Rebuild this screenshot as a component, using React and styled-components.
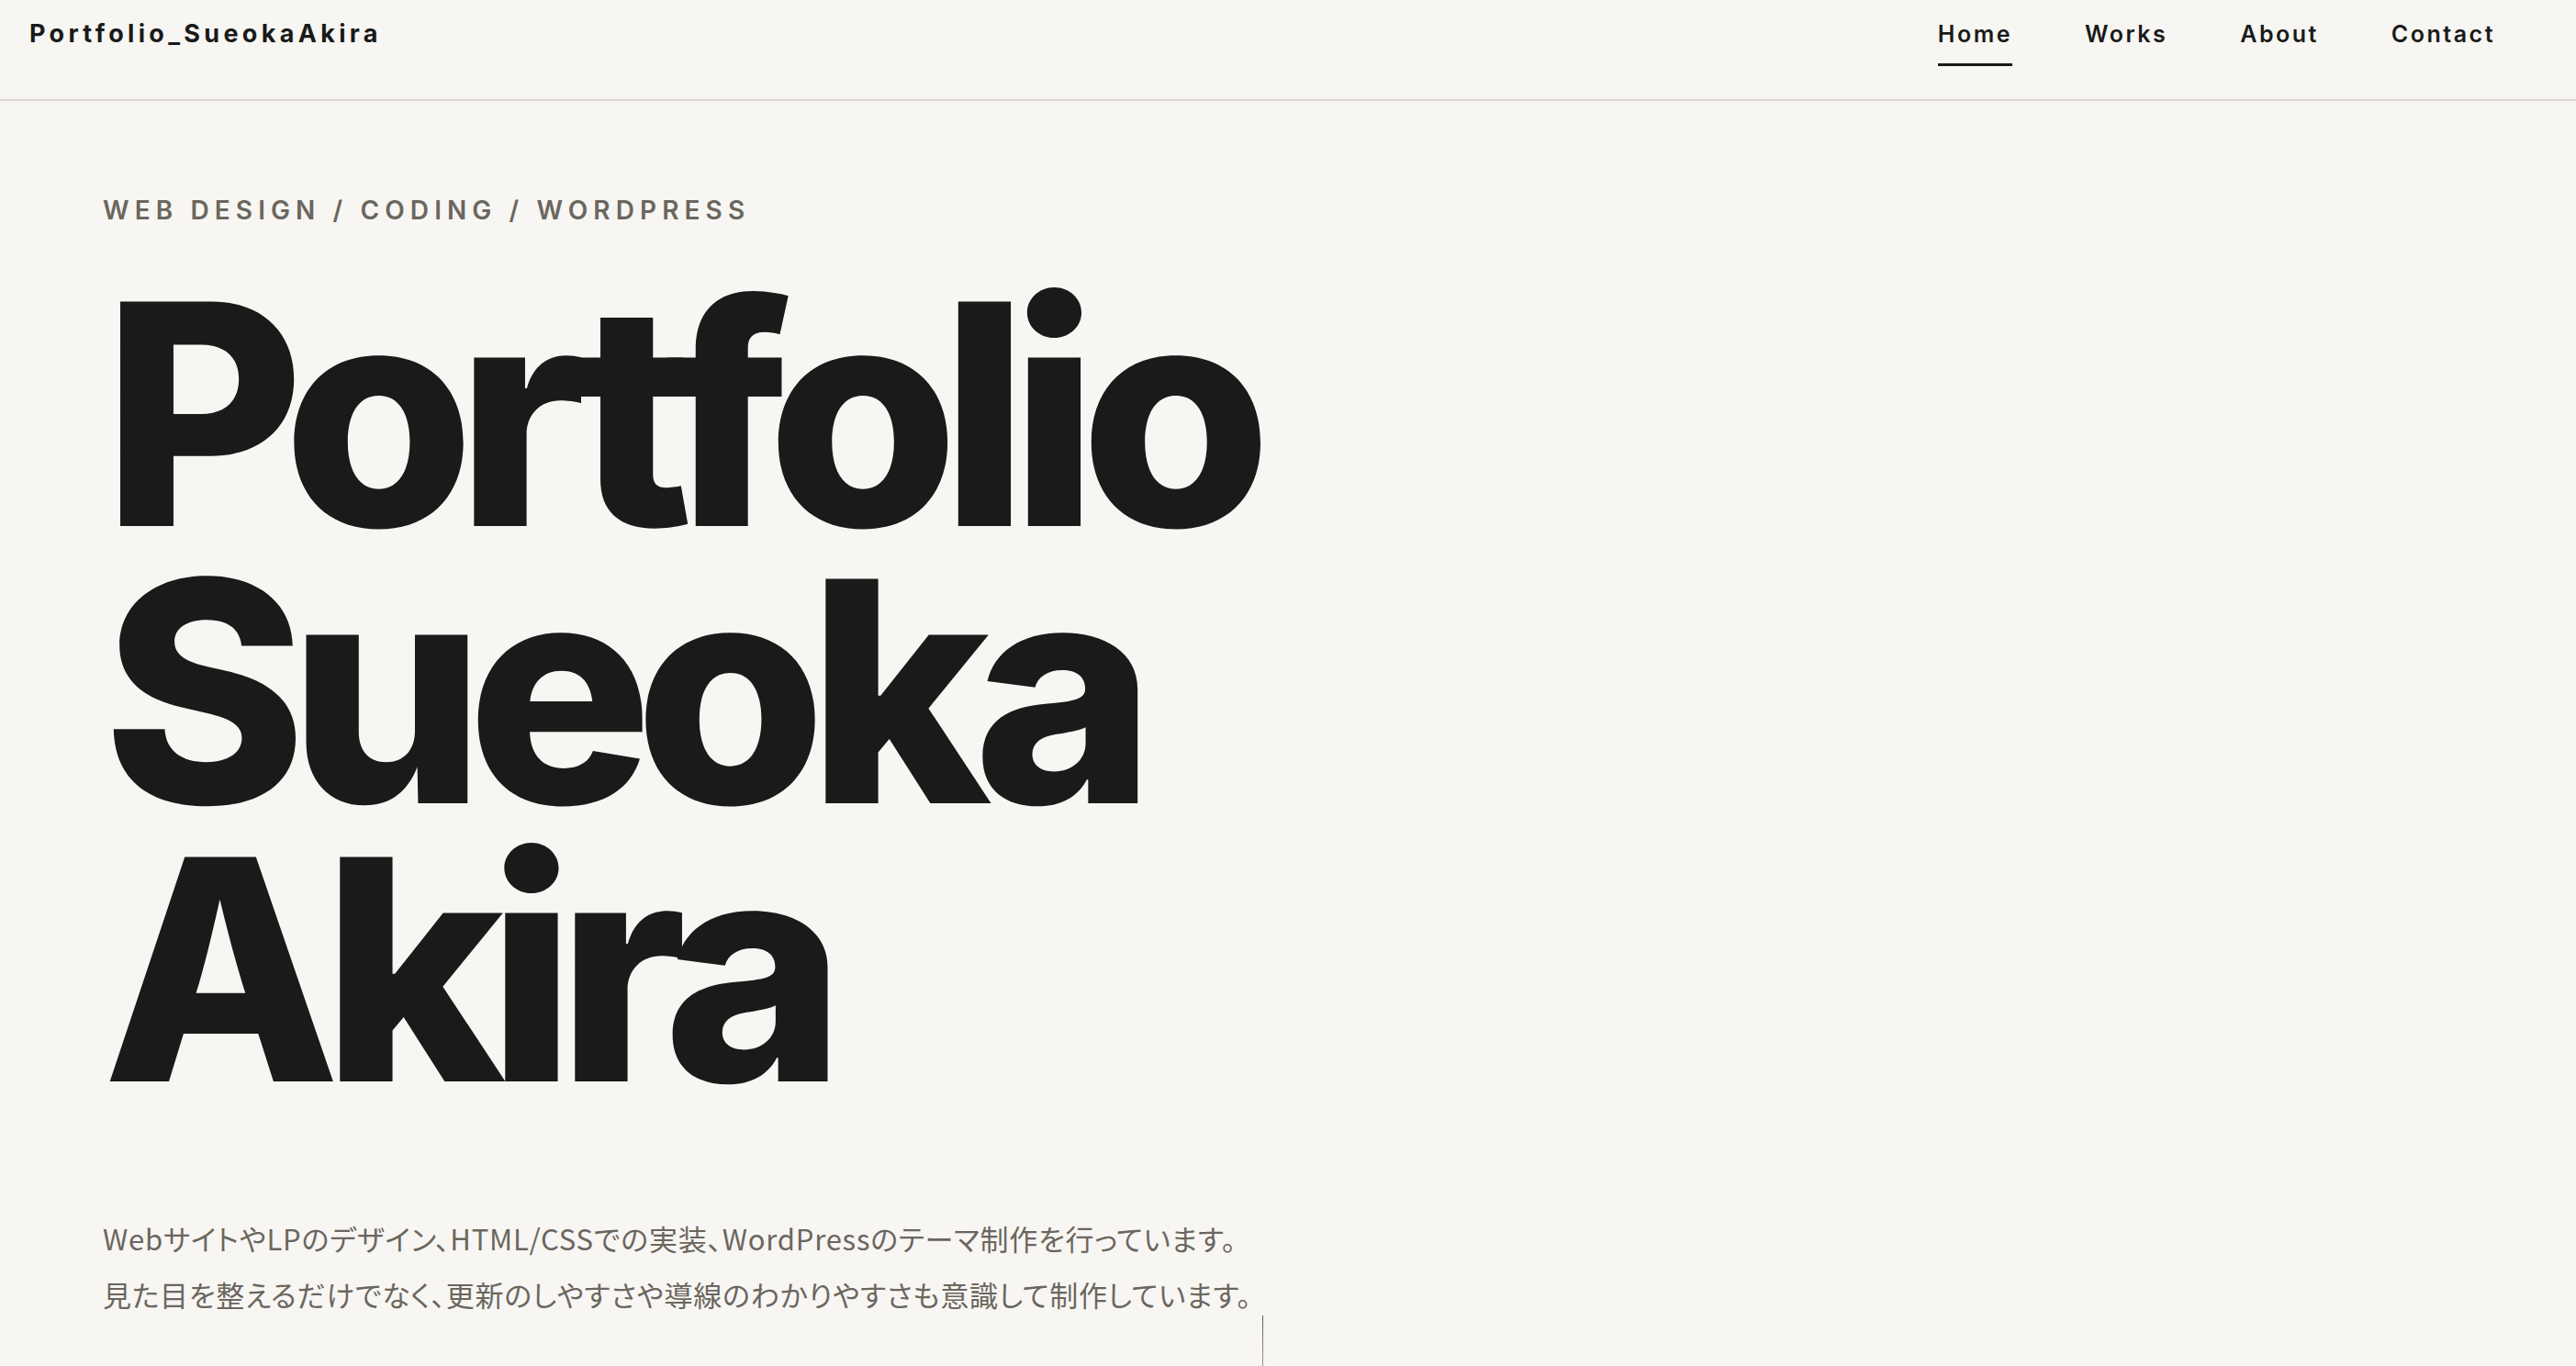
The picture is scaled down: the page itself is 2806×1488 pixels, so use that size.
import React from 'react';
import styled, { createGlobalStyle } from 'styled-components';

const GlobalStyle = createGlobalStyle`
  * {
    box-sizing: border-box;
  }
  body {
    margin: 0;
    background: #f7f6f2;
    color: #1a1a1a;
    font-family: Inter, "Noto Sans CJK JP", sans-serif;
    overflow: hidden;
  }
`;

const navItems = ['Home', 'Works', 'About', 'Contact'];

const App = () => {
  return (
    <>
      <GlobalStyle />
      <Header>
        <Logo href='#'>Portfolio_SueokaAkira</Logo>
        <Nav>
          {navItems.map((item, i) => (
            <NavLink key={item} href='#' active={i === 0 ? 1 : 0}>
              {item}
            </NavLink>
          ))}
        </Nav>
      </Header>

      <Hero>
        <Eyebrow>WEB DESIGN / CODING / WORDPRESS</Eyebrow>
        <Title>
          Portfolio
          <br />
          Sueoka
          <br />
          Akira
        </Title>
        <LeadBlock>
          <Lead>
            WebサイトやLPのデザイン、HTML/CSSでの実装、WordPressのテーマ制作を行っています。
            <br />
            見た目を整えるだけでなく、更新のしやすさや導線のわかりやすさも意識して制作しています。
          </Lead>
          <ScrollLine />
        </LeadBlock>
      </Hero>
    </>
  );
};

export default App;

const Header = styled.header`
  display: flex;
  justify-content: space-between;
  align-items: flex-start;
  height: 110px;
  padding: 17px 88px 0 32px;
  border-bottom: 2px solid #ddd6cc;
`;

const Logo = styled.a`
  font-family: Inter, sans-serif;
  font-size: 27px;
  font-weight: 700;
  letter-spacing: 0.16em;
  line-height: 40px;
  color: #1a1a1a;
  text-decoration: none;
`;

const Nav = styled.nav`
  display: flex;
  gap: 79px;
`;

const NavLink = styled.a`
  position: relative;
  font-family: Inter, sans-serif;
  font-size: 25px;
  font-weight: 600;
  letter-spacing: 0.1em;
  line-height: 40px;
  color: #1a1a1a;
  text-decoration: none;

  &::after {
    content: '';
    position: absolute;
    left: 0;
    right: 0;
    top: 52px;
    height: 3px;
    background: #1a1a1a;
    opacity: ${props => (props.active ? 1 : 0)};
  }
`;

const Hero = styled.section`
  display: flex;
  flex-direction: column;
  align-items: flex-start;
  padding: 96px 0 0 112px;
`;

const Eyebrow = styled.p`
  margin: 0;
  padding-top: 2px;
  font-family: Inter, sans-serif;
  font-size: 28px;
  font-weight: 600;
  letter-spacing: 0.218em;
  line-height: 42px;
  color: #6b665e;
`;

const Title = styled.h1`
  margin: 50px 0 0;
  font-family: Inter, sans-serif;
  font-size: 336px;
  font-weight: 800;
  letter-spacing: -0.057em;
  line-height: 0.9;
  color: #1a1a1a;
`;

const LeadBlock = styled.div`
  display: flex;
  flex-direction: column;
  align-items: flex-end;
  margin-top: 111px;
`;

const Lead = styled.p`
  margin: 0;
  font-family: "Noto Sans CJK JP", sans-serif;
  font-size: 31px;
  font-weight: 400;
  line-height: 61px;
  letter-spacing: 0.025em;
  font-feature-settings: 'palt';
  color: #6b665e;
`;

const ScrollLine = styled.span`
  width: 1px;
  height: 80px;
  margin-top: -7px;
  margin-right: -12px;
  background: linear-gradient(#5f5a53, rgba(107, 102, 94, 0.45));
`;
